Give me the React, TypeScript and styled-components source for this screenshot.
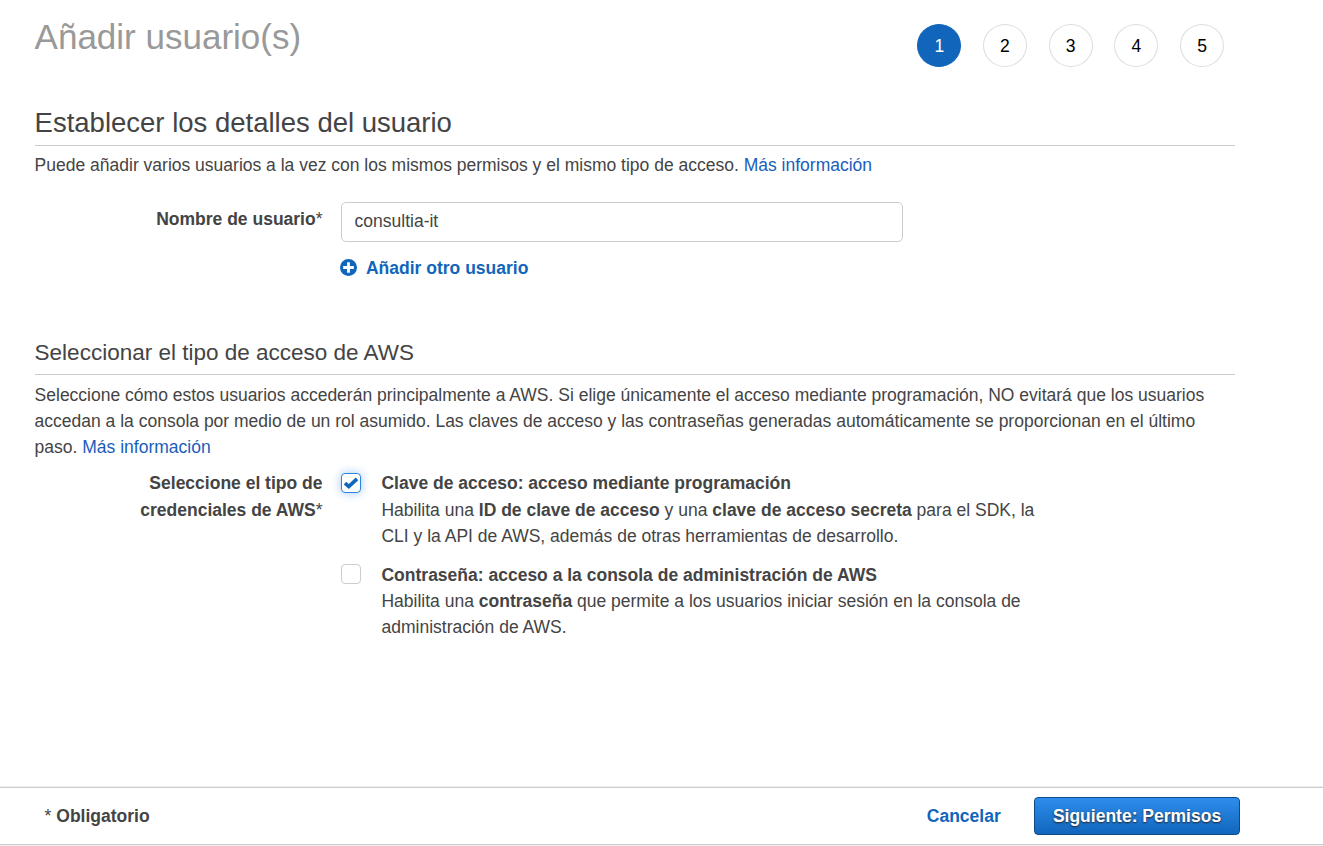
import React from 'react';
import styled, { createGlobalStyle } from 'styled-components';

const GlobalStyle = createGlobalStyle`
  * { box-sizing: border-box; }
  body {
    margin: 0;
    background: #fff;
    color: #444;
    font-family: "Liberation Sans", Arial, sans-serif;
    font-size: 17.5px;
    line-height: 26.25px;
  }
`;

const Page = styled.div`
  display: flex;
  flex-direction: column;
  height: 846px;
  overflow: hidden;
`;

const Main = styled.main`
  flex: 1;
  width: 1235px;
  padding-left: 34.6px;
`;

const Header = styled.header`
  display: flex;
  justify-content: space-between;
  height: 101px;
  padding: 17px 11px 0 0;
`;

const Title = styled.h1`
  margin: 0;
  font-size: 35px;
  line-height: 40px;
  font-weight: 400;
  color: #999;
`;

const Steps = styled.ol`
  display: flex;
  gap: 21.7px;
  margin: 0;
  padding: 7px 0 0;
  list-style: none;
`;

const Step = styled.li<{ $active?: boolean }>`
  display: flex;
  align-items: center;
  justify-content: center;
  width: 44px;
  height: 43px;
  padding-top: 1px;
  border: 1px solid ${(p) => (p.$active ? '#1166bb' : '#ddd')};
  border-radius: 50%;
  background: ${(p) => (p.$active ? '#1166bb' : '#fff')};
  color: ${(p) => (p.$active ? '#fff' : '#000')};
`;

const Heading = styled.h2<{ $small?: boolean }>`
  margin: 0;
  height: 45px;
  padding-top: ${(p) => (p.$small ? '8px' : '7px')};
  border-bottom: 1px solid #ccc;
  font-size: ${(p) => (p.$small ? '22.5px' : '27.5px')};
  line-height: 30px;
  font-weight: 400;
`;

const Intro = styled.p<{ $top?: number }>`
  margin: 0;
  padding-top: ${(p) => p.$top ?? 6}px;
  white-space: nowrap;
`;

const Link = styled.a`
  color: #1a5dba;
  text-decoration: none;
`;

const Field = styled.div<{ $top: number }>`
  display: grid;
  grid-template-columns: 287.9px 1fr;
  column-gap: 18.5px;
  padding-top: ${(p) => p.$top}px;
`;

const Label = styled.label<{ $top?: number }>`
  padding-top: ${(p) => p.$top ?? 0}px;
  text-align: right;
  font-weight: 700;
  white-space: nowrap;
`;

const Star = styled.span`
  font-weight: 400;
`;

const TextInput = styled.input`
  display: block;
  width: 562px;
  height: 40px;
  padding: 0 13px 2px 12.6px;
  border: 1px solid #ccc;
  border-radius: 5px;
  color: #444;
  background: #fff;
  font: inherit;
  outline: none;
`;

const AddButton = styled.button`
  display: flex;
  align-items: center;
  gap: 9px;
  margin: 13px 0 0 -1px;
  padding: 0;
  border: 0;
  background: none;
  color: #1166bb;
  font: inherit;
  font-weight: 700;

  svg {
    margin-bottom: 2px;
  }
`;

const AccessSection = styled.section`
  padding-top: 48px;
`;

const Options = styled.div`
  display: flex;
  flex-direction: column;
  gap: 12.6px;
`;

const Option = styled.div`
  display: flex;
  gap: 20.5px;
`;

const Check = styled.span<{ $on?: boolean }>`
  display: flex;
  align-items: center;
  justify-content: center;
  width: 20px;
  height: 20px;
  margin-top: ${(p) => (p.$on ? '3px' : '2.4px')};
  border: 1px solid ${(p) => (p.$on ? '#2a84e0' : '#ccc')};
  border-radius: 4px;
  background: #fff;
  box-shadow: ${(p) => (p.$on ? '0 0 10px rgba(42, 132, 224, 0.45)' : 'none')};
`;

const OptionText = styled.div`
  white-space: nowrap;
`;

const Footer = styled.footer`
  display: flex;
  align-items: center;
  height: 58px;
  padding: 0 83px 0 44.6px;
  border-top: 1px solid #ccc;
  border-bottom: 1px solid #ccc;
  box-shadow: 0 -1px 0 #eee;
  font-weight: 700;
`;

const Cancel = styled.a`
  margin-left: auto;
  margin-right: 33.3px;
  color: #1166bb;
`;

const NextButton = styled.button`
  width: 206px;
  height: 38px;
  padding: 1px 0 0;
  border: 1px solid #0f4a85;
  border-radius: 4px;
  background: linear-gradient(#2e8ded, #1166bb);
  color: #fff;
  font: inherit;
  font-weight: 700;
  text-shadow: 0 1px 2px #222;
`;

const BottomStrip = styled.div`
  height: 1px;
  background: #eee;
`;

const PlusIcon = () => (
  <svg width="17" height="17" viewBox="0 0 17 17">
    <circle cx="8.5" cy="8.5" r="8.5" fill="#1166bb" />
    <path d="M8.5 3.2v10.6M3.2 8.5h10.6" stroke="#fff" strokeWidth="2.8" />
  </svg>
);

const CheckIcon = () => (
  <svg width="16" height="14" viewBox="0 0 16 14">
    <path d="M2 7.2l3.8 3.4L14 2.8" fill="none" stroke="#1166bb" strokeWidth="3.7" />
  </svg>
);

export default function App() {
  return (
    <>
      <GlobalStyle />
      <Page>
        <Main>
          <Header>
            <Title>Añadir usuario(s)</Title>
            <Steps>
              {[1, 2, 3, 4, 5].map((n) => (
                <Step key={n} $active={n === 1}>{n}</Step>
              ))}
            </Steps>
          </Header>

          <section>
            <Heading>Establecer los detalles del usuario</Heading>
            <Intro>
              Puede añadir varios usuarios a la vez con los mismos permisos y el mismo tipo de acceso.{' '}
              <Link>Más información</Link>
            </Intro>
            <Field $top={24}>
              <Label htmlFor="user" $top={4}>Nombre de usuario<Star>*</Star></Label>
              <div>
                <TextInput id="user" defaultValue="consultia-it" />
                <AddButton type="button"><PlusIcon />Añadir otro usuario</AddButton>
              </div>
            </Field>
          </section>

          <AccessSection>
            <Heading $small>Seleccionar el tipo de acceso de AWS</Heading>
            <Intro $top={7}>
              Seleccione cómo estos usuarios accederán principalmente a AWS. Si elige únicamente el acceso mediante programación, NO evitará que los usuarios<br />
              accedan a la consola por medio de un rol asumido. Las claves de acceso y las contraseñas generadas automáticamente se proporcionan en el último<br />
              paso. <Link>Más información</Link>
            </Intro>
            <Field $top={10}>
              <Label as="div">Seleccione el tipo de<br />credenciales de AWS<Star>*</Star></Label>
              <Options>
                <Option>
                  <Check $on role="checkbox" aria-checked="true"><CheckIcon /></Check>
                  <OptionText>
                    <b>Clave de acceso: acceso mediante programación</b><br />
                    Habilita una <b>ID de clave de acceso</b> y una <b>clave de acceso secreta</b> para el SDK, la<br />
                    CLI y la API de AWS, además de otras herramientas de desarrollo.
                  </OptionText>
                </Option>
                <Option>
                  <Check role="checkbox" aria-checked="false" />
                  <OptionText>
                    <b>Contraseña: acceso a la consola de administración de AWS</b><br />
                    Habilita una <b>contraseña</b> que permite a los usuarios iniciar sesión en la consola de<br />
                    administración de AWS.
                  </OptionText>
                </Option>
              </Options>
            </Field>
          </AccessSection>
        </Main>
        <Footer>
          <span><Star>*</Star> Obligatorio</span>
          <Cancel>Cancelar</Cancel>
          <NextButton type="button">Siguiente: Permisos</NextButton>
        </Footer>
        <BottomStrip />
      </Page>
    </>
  );
}
